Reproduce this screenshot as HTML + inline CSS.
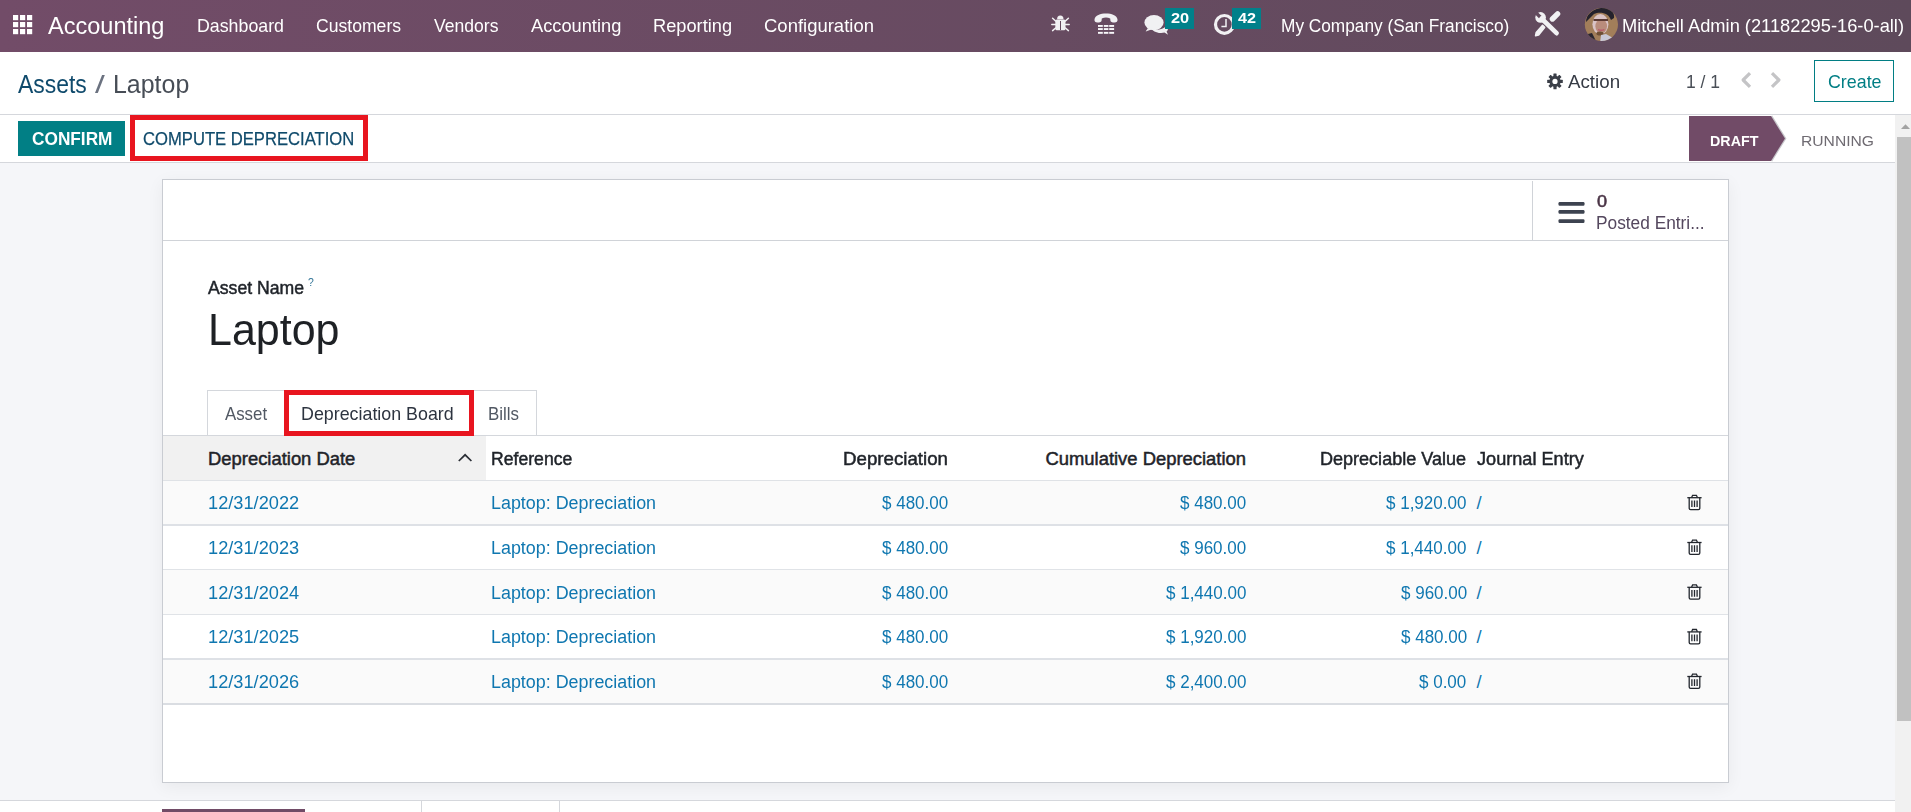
<!DOCTYPE html>
<html>
<head>
<meta charset="utf-8">
<style>
html,body{margin:0;padding:0;width:1911px;height:812px;overflow:hidden;background:#f5f6f9;font-family:"Liberation Sans",sans-serif;}
.a{position:absolute;}
.t{position:absolute;white-space:pre;line-height:normal;transform-origin:0 0;font-family:"Liberation Sans",sans-serif;}
svg{position:absolute;overflow:visible;}
</style>
</head>
<body>
<!-- navbar -->
<div class="a" style="left:0;top:0;width:1911px;height:52px;background:linear-gradient(90deg,#724c68,#5e4a5b);"></div>
<!-- app grid icon -->
<svg style="left:0;top:0" width="60" height="52">
 <g fill="#fff">
  <rect x="13" y="15" width="5.2" height="5.2"/><rect x="20" y="15" width="5.2" height="5.2"/><rect x="27" y="15" width="5.2" height="5.2"/>
  <rect x="13" y="22" width="5.2" height="5.2"/><rect x="20" y="22" width="5.2" height="5.2"/><rect x="27" y="22" width="5.2" height="5.2"/>
  <rect x="13" y="29" width="5.2" height="5.2"/><rect x="20" y="29" width="5.2" height="5.2"/><rect x="27" y="29" width="5.2" height="5.2"/>
 </g>
</svg>
<!-- bug icon -->
<svg style="left:1045px;top:8px" width="30" height="30" viewBox="1045 8 30 30">
 <g fill="#f1f1f3">
  <path d="M1057.1 19.2 A3.2 3.6 0 0 1 1063.5 19.2 Z"/>
  <rect x="1055.3" y="19.6" width="10.2" height="10.6" rx="1.5"/>
 </g>
 <g stroke="#f1f1f3" stroke-width="1.5" stroke-linecap="round" fill="none">
  <path d="M1052.6 18.2 L1055.6 21"/><path d="M1068.4 18.2 L1065.4 21"/>
  <path d="M1051.8 24.4 L1055.5 24.4"/><path d="M1069.2 24.4 L1065.5 24.4"/>
  <path d="M1052.6 30.6 L1055.6 28"/><path d="M1068.4 30.6 L1065.4 28"/>
 </g>
 <rect x="1060" y="21" width="1" height="9" fill="#644a5e"/>
</svg>
<!-- phone icon -->
<svg style="left:1090px;top:8px" width="32" height="30" viewBox="1090 8 32 30">
 <path d="M1094.5 19.5 C1095.5 11.6 1116.5 11.6 1117.5 19.5 C1117.8 21.5 1116.5 22.4 1114.6 22.4 C1112 22.4 1110.6 21.8 1110.4 20.4 L1110.2 18.6 C1107.5 17.2 1104.5 17.2 1101.8 18.6 L1101.6 20.4 C1101.4 21.8 1100 22.4 1097.4 22.4 C1095.5 22.4 1094.2 21.5 1094.5 19.5 Z" fill="#f1f1f3"/>
 <g fill="#f8f8fa">
  <rect x="1098" y="25" width="4.8" height="1.9"/><rect x="1103.8" y="25" width="4.6" height="1.9"/><rect x="1109.2" y="25" width="4.9" height="1.9"/>
  <rect x="1098" y="28.1" width="4.8" height="1.9"/><rect x="1103.8" y="28.1" width="4.6" height="1.9"/><rect x="1109.2" y="28.1" width="4.9" height="1.9"/>
  <rect x="1098" y="31.9" width="4.8" height="1.9"/><rect x="1103.8" y="31.9" width="4.6" height="1.9"/><rect x="1109.2" y="31.9" width="4.9" height="1.9"/>
 </g>
</svg>
<!-- chat icon -->
<svg style="left:1140px;top:8px" width="32" height="30" viewBox="1140 8 32 30">
 <path d="M1152.5 30 C1156 33.2 1161.5 33.6 1164.5 32.6 L1168 34.8 L1166.6 31.6 C1168.6 30 1168.4 27 1166.8 25.4 C1165 27.8 1160 30.2 1152.5 30 Z" fill="#f1f1f3"/>
 <ellipse cx="1154" cy="22.6" rx="9.6" ry="7.6" fill="#f1f1f3"/>
 <path d="M1148 28 L1145.6 31.6 L1151.4 29.6 Z" fill="#f1f1f3"/>
</svg>
<!-- clock icon -->
<svg style="left:1210px;top:8px" width="30" height="30" viewBox="1210 8 30 30">
 <circle cx="1224.4" cy="24.4" r="8.9" fill="none" stroke="#f1f1f3" stroke-width="3.2"/>
 <path d="M1226 19 V26.4 H1221.4" fill="none" stroke="#f1f1f3" stroke-width="1.5"/>
</svg>
<!-- badges -->
<div class="a" style="left:1165px;top:7.5px;width:28.5px;height:21.5px;background:#01808a;"></div>
<div class="a" style="left:1232px;top:8px;width:28.5px;height:21px;background:#01808a;"></div>
<!-- tools icon -->
<svg style="left:1530px;top:6px" width="36" height="36" viewBox="1530 6 36 36">
 <defs><mask id="wm"><rect x="1530" y="6" width="36" height="36" fill="#fff"/><path d="M1540.4 17.2 L1535 11.8" stroke="#000" stroke-width="3.4"/></mask></defs>
 <g fill="#f1f1f3" mask="url(#wm)">
  <circle cx="1540.6" cy="17.4" r="5.3"/>
 </g>
 <path d="M1541.5 18.5 L1556.6 33.2" stroke="#f1f1f3" stroke-width="4.6" stroke-linecap="round"/>
 <path d="M1552.4 19 L1557.6 13.8" stroke="#f1f1f3" stroke-width="5.4" stroke-linecap="round"/>
 <path d="M1544.6 27.4 L1542.6 25.4 L1536.2 32.6 L1535.6 35.6 L1538.6 35 Z" fill="#f1f1f3" stroke="#f1f1f3" stroke-width="1.6" stroke-linejoin="round"/>
</svg>
<!-- avatar -->
<svg style="left:1584px;top:7px" width="36" height="36" viewBox="1584 7 36 36">
 <defs><clipPath id="av"><circle cx="1601.4" cy="24.5" r="16.6"/></clipPath></defs>
 <g clip-path="url(#av)">
  <rect x="1584" y="7" width="36" height="36" fill="#a27e5a"/>
  <path d="M1586 22 C1586 6 1616 2 1614 18 L1611 20 C1609 13 1600 11 1594 14 L1590 18 Z" fill="#24222c"/>
  <path d="M1588 34 L1592 33 L1597 43 L1588 43 Z" fill="#2a2630"/>
  <ellipse cx="1600.4" cy="24.2" rx="8" ry="10.2" fill="#d9c3c6"/>
  <ellipse cx="1601.2" cy="26.2" rx="5.8" ry="7" fill="#b98c7c"/>
  <path d="M1593.5 20 H1608" stroke="#5a3a34" stroke-width="2.2"/>
  <path d="M1598 29.6 Q1601.2 31 1604.4 29.6" stroke="#b85a6a" stroke-width="1.4" fill="none"/>
  <ellipse cx="1600" cy="33.6" rx="3.6" ry="2" fill="#6e4e34"/>
  <path d="M1600 43 L1601 35 L1606 34 L1613 38 L1612 43 Z" fill="#c9c8d6"/>
 </g>
</svg>
<!-- control panel -->
<div class="a" style="left:0;top:52px;width:1911px;height:62px;background:#fff;"></div>
<div class="a" style="left:0;top:114px;width:1911px;height:1px;background:#d5d7dc;"></div>
<!-- gear -->
<svg style="left:1540px;top:68px" width="30" height="26" viewBox="1540 68 30 26">
 <g fill="#3b3f48" transform="translate(1555 81.4)">
  <circle r="5.6"/>
  <rect x="-1.6" y="-7.8" width="3.2" height="15.6" rx="0.5"/>
  <rect x="-1.6" y="-7.8" width="3.2" height="15.6" rx="0.5" transform="rotate(45)"/>
  <rect x="-1.6" y="-7.8" width="3.2" height="15.6" rx="0.5" transform="rotate(90)"/>
  <rect x="-1.6" y="-7.8" width="3.2" height="15.6" rx="0.5" transform="rotate(135)"/>
 </g>
 <circle cx="1555" cy="81.4" r="2.6" fill="#fff"/>
</svg>
<!-- chevrons -->
<svg style="left:1735px;top:66px" width="56" height="28" viewBox="1735 66 56 28">
 <path d="M1750 73.2 L1743.1 80 L1750 86.8" fill="none" stroke="#c4c4c6" stroke-width="3.2" stroke-linejoin="round"/>
 <path d="M1772 73.2 L1778.9 80 L1772 86.8" fill="none" stroke="#c4c4c6" stroke-width="3.2" stroke-linejoin="round"/>
</svg>
<!-- create btn -->
<div class="a" style="left:1814px;top:60px;width:78px;height:40px;border:1px solid #017e84;background:#fff;"></div>

<!-- status bar area -->
<div class="a" style="left:0;top:115px;width:1895px;height:47px;background:#fff;"></div>
<div class="a" style="left:0;top:162px;width:1895px;height:1px;background:#d5d7dc;"></div>
<!-- confirm -->
<div class="a" style="left:18px;top:121px;width:107px;height:35px;background:#017f85;"></div>
<!-- red box compute -->
<div class="a" style="left:130px;top:115px;width:228px;height:36px;border:5px solid #e8151f;background:#fff;"></div>
<!-- draft arrow -->
<svg style="left:1680px;top:112px" width="120" height="52" viewBox="1680 112 120 52">
 <path d="M1771.5 116 L1785.5 138.4 L1771.5 161" fill="none" stroke="#c8c8cc" stroke-width="1.6"/>
 <path d="M1689 116 H1771 L1785 138.4 L1771 161 H1689 Z" fill="#714b67"/>
</svg>
<!-- scrollbar -->
<div class="a" style="left:1895px;top:115px;width:16px;height:697px;background:#f1f1f1;"></div>
<div class="a" style="left:1897px;top:136.5px;width:14px;height:584px;background:#c1c1c1;"></div>
<svg style="left:1895px;top:115px" width="16" height="20" viewBox="1895 115 16 20">
 <path d="M1901 129 L1905.5 124.2 L1910 129 Z" fill="#a3a3a3"/>
</svg>

<!-- sheet -->
<div class="a" style="left:162px;top:179px;width:1565px;height:602px;border:1px solid #c9ccd2;background:#fff;box-shadow:0 4px 16px rgba(0,0,0,0.055);"></div>
<div class="a" style="left:163px;top:240px;width:1565px;height:1px;background:#d0d3d8;"></div>
<div class="a" style="left:1532px;top:181px;width:1px;height:59px;background:#d0d3d8;"></div>
<!-- hamburger -->
<svg style="left:1550px;top:195px" width="40" height="36" viewBox="1550 195 40 36">
 <g fill="#3d4350">
  <rect x="1558.5" y="202" width="26" height="3.7" rx="1.2"/>
  <rect x="1558.5" y="210.1" width="26" height="3.7" rx="1.2"/>
  <rect x="1558.5" y="219.3" width="26" height="3.7" rx="1.2"/>
 </g>
</svg>
<!-- tabs -->
<div class="a" style="left:207px;top:390px;width:328px;height:45px;border:1px solid #d4d7dc;border-bottom:none;background:#fff;"></div>
<div class="a" style="left:163px;top:435px;width:1565px;height:1px;background:#d4d7dc;"></div>
<div class="a" style="left:284px;top:390px;width:180px;height:36px;border:5px solid #e8151f;background:#fff;"></div>

<!-- table header -->
<div class="a" style="left:163px;top:436px;width:323px;height:44px;background:#f1f1f1;"></div>
<div class="a" style="left:163px;top:480px;width:1565px;height:1px;background:#dfe2e6;"></div>
<svg style="left:450px;top:448px" width="30" height="20" viewBox="450 448 30 20">
 <path d="M458.8 461 L465.1 454.8 L471.4 461" fill="none" stroke="#2a2e35" stroke-width="1.7"/>
</svg>
<!-- rows -->
<div class="a" style="left:163px;top:481px;width:1565px;height:43px;background:#fafafa;"></div>
<div class="a" style="left:163px;top:524px;width:1565px;height:2px;background:#dee1e6;"></div>
<div class="a" style="left:163px;top:569px;width:1565px;height:1px;background:#e0e3e7;"></div>
<div class="a" style="left:163px;top:570px;width:1565px;height:44px;background:#fafafa;"></div>
<div class="a" style="left:163px;top:614px;width:1565px;height:1px;background:#e0e3e7;"></div>
<div class="a" style="left:163px;top:658px;width:1565px;height:2px;background:#dee1e6;"></div>
<div class="a" style="left:163px;top:660px;width:1565px;height:43px;background:#fafafa;"></div>
<div class="a" style="left:163px;top:703px;width:1565px;height:2px;background:#dadde2;"></div>
<!-- trash icons -->
<svg style="left:1680px;top:480px" width="30" height="225" viewBox="1680 480 30 225">
 <defs>
  <g id="tr" fill="none" stroke="#23272e" stroke-width="1.3">
   <path d="M1687.3 497.7 H1701.6"/>
   <path d="M1691.6 497.5 L1692.6 495.3 H1696.4 L1697.4 497.5"/>
   <path d="M1689.2 497.8 V508.2 Q1689.2 509.6 1690.6 509.6 H1698.4 Q1699.8 509.6 1699.8 508.2 V497.8"/>
   <path d="M1691.9 500.4 V507.1 M1694.5 500.4 V507.1 M1697.1 500.4 V507.1"/>
  </g>
 </defs>
 <use href="#tr"/>
 <use href="#tr" y="44.8"/>
 <use href="#tr" y="89.6"/>
 <use href="#tr" y="134.2"/>
 <use href="#tr" y="178.8"/>
</svg>

<!-- chatter -->
<div class="a" style="left:0;top:800px;width:1895px;height:12px;background:#fff;"></div>
<div class="a" style="left:0;top:800px;width:1895px;height:1px;background:#d5d7dc;"></div>
<div class="a" style="left:162px;top:809px;width:143px;height:3px;background:#714b67;"></div>
<div class="a" style="left:421px;top:800px;width:1px;height:12px;background:#d5d7dc;"></div>
<div class="a" style="left:559px;top:800px;width:1px;height:12px;background:#d5d7dc;"></div>

<span class="t" style="left:48.40px;top:12.87px;font-size:23.62px;color:#ffffff;transform:scaleX(0.9967);">Accounting</span>
<span class="t" style="left:197.28px;top:14.77px;font-size:19.28px;color:#ffffff;transform:scaleX(0.9229);">Dashboard</span>
<span class="t" style="left:316.12px;top:14.77px;font-size:19.28px;color:#ffffff;transform:scaleX(0.9131);">Customers</span>
<span class="t" style="left:433.82px;top:14.77px;font-size:19.28px;color:#ffffff;transform:scaleX(0.9115);">Vendors</span>
<span class="t" style="left:531.20px;top:14.77px;font-size:19.28px;color:#ffffff;transform:scaleX(0.9472);">Accounting</span>
<span class="t" style="left:653.14px;top:14.77px;font-size:19.28px;color:#ffffff;transform:scaleX(0.9460);">Reporting</span>
<span class="t" style="left:764.08px;top:14.77px;font-size:19.28px;color:#ffffff;transform:scaleX(0.9593);">Configuration</span>
<span class="t" style="left:1170.51px;top:10.10px;font-size:14.35px;color:#ffffff;font-weight:700;transform:scaleX(1.1393);">20</span>
<span class="t" style="left:1237.68px;top:10.10px;font-size:14.35px;color:#ffffff;font-weight:700;transform:scaleX(1.1284);">42</span>
<span class="t" style="left:1281.02px;top:14.77px;font-size:19.28px;color:#ffffff;transform:scaleX(0.8960);">My Company (San Francisco)</span>
<span class="t" style="left:1621.54px;top:14.77px;font-size:19.28px;color:#ffffff;transform:scaleX(0.9484);">Mitchell Admin (21182295-16-0-all)</span>
<span class="t" style="left:18.40px;top:69.73px;font-size:25.94px;color:#0f4a6c;transform:scaleX(0.8829);">Assets</span>
<span class="t" style="left:94.80px;top:70.57px;font-size:24.38px;color:#6b7280;transform:scaleX(1.4500);">/</span>
<span class="t" style="left:112.71px;top:69.73px;font-size:25.94px;color:#474d56;transform:scaleX(0.9611);">Laptop</span>
<span class="t" style="left:1567.90px;top:70.67px;font-size:18.84px;color:#363b45;transform:scaleX(0.9949);">Action</span>
<span class="t" style="left:1686.10px;top:70.67px;font-size:18.84px;color:#4a4f57;transform:scaleX(0.9303);">1 / 1</span>
<span class="t" style="left:1827.51px;top:70.67px;font-size:18.84px;color:#017e84;transform:scaleX(0.9466);">Create</span>
<span class="t" style="left:31.61px;top:127.60px;font-size:18.70px;color:#ffffff;font-weight:700;transform:scaleX(0.9231);">CONFIRM</span>
<span class="t" style="left:142.77px;top:127.60px;font-size:18.70px;color:#0f4a6b;transform:scaleX(0.8898);-webkit-text-stroke:0.25px #0f4a6b;">COMPUTE DEPRECIATION</span>
<span class="t" style="left:1709.60px;top:131.87px;font-size:14.93px;color:#ffffff;font-weight:700;transform:scaleX(0.9573);">DRAFT</span>
<span class="t" style="left:1800.55px;top:131.87px;font-size:14.93px;color:#6f6b72;transform:scaleX(1.0487);">RUNNING</span>
<span class="t" style="left:1596.58px;top:192.20px;font-size:16.09px;color:#4a3446;transform:scaleX(1.1267);-webkit-text-stroke:0.5px #4a3446;">0</span>
<span class="t" style="left:1596.32px;top:212.63px;font-size:18.12px;color:#54475e;transform:scaleX(0.9549);">Posted Entri...</span>
<span class="t" style="left:207.70px;top:276.73px;font-size:18.55px;color:#1f2329;transform:scaleX(0.9513);-webkit-text-stroke:0.5px #1f2329;">Asset Name</span>
<span class="t" style="left:308.18px;top:276.09px;font-size:11.43px;color:#2f7396;transform:scaleX(0.9115);">?</span>
<span class="t" style="left:207.56px;top:303.97px;font-size:44.93px;color:#1e2125;transform:scaleX(0.9569);">Laptop</span>
<span class="t" style="left:225.10px;top:402.67px;font-size:18.84px;color:#515863;transform:scaleX(0.8931);">Asset</span>
<span class="t" style="left:300.97px;top:402.67px;font-size:18.84px;color:#2d3440;transform:scaleX(0.9474);">Depreciation Board</span>
<span class="t" style="left:487.55px;top:402.67px;font-size:18.84px;color:#515863;transform:scaleX(0.8980);">Bills</span>
<span class="t" style="left:208.03px;top:448.07px;font-size:18.41px;color:#1f2329;-webkit-text-stroke:0.5px #1f2329;">Depreciation Date</span>
<span class="t" style="left:491.19px;top:448.07px;font-size:18.41px;color:#1f2329;transform:scaleX(0.9571);-webkit-text-stroke:0.5px #1f2329;">Reference</span>
<span class="t" style="left:842.80px;top:448.07px;font-size:18.41px;color:#1f2329;transform:scaleX(1.0161);-webkit-text-stroke:0.5px #1f2329;">Depreciation</span>
<span class="t" style="left:1045.48px;top:448.07px;font-size:18.41px;color:#1f2329;-webkit-text-stroke:0.5px #1f2329;">Cumulative Depreciation</span>
<span class="t" style="left:1320.26px;top:448.07px;font-size:18.41px;color:#1f2329;transform:scaleX(0.9796);-webkit-text-stroke:0.5px #1f2329;">Depreciable Value</span>
<span class="t" style="left:1477.04px;top:448.07px;font-size:18.41px;color:#1f2329;transform:scaleX(0.9848);-webkit-text-stroke:0.5px #1f2329;">Journal Entry</span>
<span class="t" style="left:208.04px;top:492.07px;font-size:18.41px;color:#0f77b0;transform:scaleX(0.9896)">12/31/2022</span>
<span class="t" style="left:491.17px;top:492.07px;font-size:18.41px;color:#0f77b0;transform:scaleX(0.9717)">Laptop: Depreciation</span>
<span class="t" style="left:881.83px;top:492.07px;font-size:18.41px;color:#0f77b0;transform:scaleX(0.9239)">$ 480.00</span>
<span class="t" style="left:1179.83px;top:492.07px;font-size:18.41px;color:#0f77b0;transform:scaleX(0.9239)">$ 480.00</span>
<span class="t" style="left:1386.25px;top:492.07px;font-size:18.41px;color:#0f77b0;transform:scaleX(0.9239)">$ 1,920.00</span>
<span class="t" style="left:1476.50px;top:492.07px;font-size:18.41px;color:#0f77b0;transform:scaleX(1.0000)">/</span>
<span class="t" style="left:208.04px;top:537.07px;font-size:18.41px;color:#0f77b0;transform:scaleX(0.9896)">12/31/2023</span>
<span class="t" style="left:491.17px;top:537.07px;font-size:18.41px;color:#0f77b0;transform:scaleX(0.9717)">Laptop: Depreciation</span>
<span class="t" style="left:881.83px;top:537.07px;font-size:18.41px;color:#0f77b0;transform:scaleX(0.9239)">$ 480.00</span>
<span class="t" style="left:1179.83px;top:537.07px;font-size:18.41px;color:#0f77b0;transform:scaleX(0.9239)">$ 960.00</span>
<span class="t" style="left:1386.25px;top:537.07px;font-size:18.41px;color:#0f77b0;transform:scaleX(0.9239)">$ 1,440.00</span>
<span class="t" style="left:1476.50px;top:537.07px;font-size:18.41px;color:#0f77b0;transform:scaleX(1.0000)">/</span>
<span class="t" style="left:208.04px;top:581.87px;font-size:18.41px;color:#0f77b0;transform:scaleX(0.9896)">12/31/2024</span>
<span class="t" style="left:491.17px;top:581.87px;font-size:18.41px;color:#0f77b0;transform:scaleX(0.9717)">Laptop: Depreciation</span>
<span class="t" style="left:881.83px;top:581.87px;font-size:18.41px;color:#0f77b0;transform:scaleX(0.9239)">$ 480.00</span>
<span class="t" style="left:1165.55px;top:581.87px;font-size:18.41px;color:#0f77b0;transform:scaleX(0.9239)">$ 1,440.00</span>
<span class="t" style="left:1400.53px;top:581.87px;font-size:18.41px;color:#0f77b0;transform:scaleX(0.9239)">$ 960.00</span>
<span class="t" style="left:1476.50px;top:581.87px;font-size:18.41px;color:#0f77b0;transform:scaleX(1.0000)">/</span>
<span class="t" style="left:208.04px;top:626.37px;font-size:18.41px;color:#0f77b0;transform:scaleX(0.9896)">12/31/2025</span>
<span class="t" style="left:491.17px;top:626.37px;font-size:18.41px;color:#0f77b0;transform:scaleX(0.9717)">Laptop: Depreciation</span>
<span class="t" style="left:881.83px;top:626.37px;font-size:18.41px;color:#0f77b0;transform:scaleX(0.9239)">$ 480.00</span>
<span class="t" style="left:1165.55px;top:626.37px;font-size:18.41px;color:#0f77b0;transform:scaleX(0.9239)">$ 1,920.00</span>
<span class="t" style="left:1400.53px;top:626.37px;font-size:18.41px;color:#0f77b0;transform:scaleX(0.9239)">$ 480.00</span>
<span class="t" style="left:1476.50px;top:626.37px;font-size:18.41px;color:#0f77b0;transform:scaleX(1.0000)">/</span>
<span class="t" style="left:208.04px;top:671.17px;font-size:18.41px;color:#0f77b0;transform:scaleX(0.9896)">12/31/2026</span>
<span class="t" style="left:491.17px;top:671.17px;font-size:18.41px;color:#0f77b0;transform:scaleX(0.9717)">Laptop: Depreciation</span>
<span class="t" style="left:881.83px;top:671.17px;font-size:18.41px;color:#0f77b0;transform:scaleX(0.9239)">$ 480.00</span>
<span class="t" style="left:1165.55px;top:671.17px;font-size:18.41px;color:#0f77b0;transform:scaleX(0.9239)">$ 2,400.00</span>
<span class="t" style="left:1419.41px;top:671.17px;font-size:18.41px;color:#0f77b0;transform:scaleX(0.9239)">$ 0.00</span>
<span class="t" style="left:1476.50px;top:671.17px;font-size:18.41px;color:#0f77b0;transform:scaleX(1.0000)">/</span>
</body>
</html>
